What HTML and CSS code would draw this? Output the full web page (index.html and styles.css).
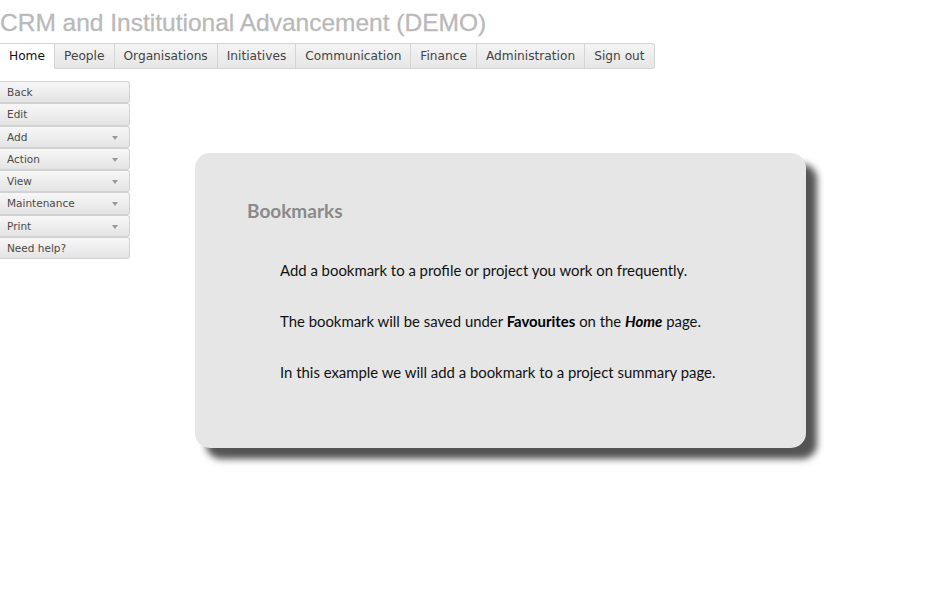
FILE: index.html
```html
<!DOCTYPE html>
<html>
<head>
<meta charset="utf-8">
<link rel="stylesheet" href="styles.css">
</head>
<body>
<div class="title">CRM and Institutional Advancement (DEMO)</div>
<nav class="tabs">
  <span class="tab active">Home</span>
  <span class="tab">People</span>
  <span class="tab">Organisations</span>
  <span class="tab">Initiatives</span>
  <span class="tab">Communication</span>
  <span class="tab">Finance</span>
  <span class="tab">Administration</span>
  <span class="tab">Sign out</span>
</nav>
<div class="main">
  <aside class="side">
    <div class="btn">Back</div>
    <div class="btn">Edit</div>
    <div class="btn drop">Add</div>
    <div class="btn drop">Action</div>
    <div class="btn drop">View</div>
    <div class="btn drop">Maintenance</div>
    <div class="btn drop">Print</div>
    <div class="btn">Need help?</div>
  </aside>
  <section class="card">
    <h2>Bookmarks</h2>
    <p>Add a bookmark to a profile or project you work on frequently.</p>
    <p>The bookmark will be saved under <b>Favourites</b> on the <b><i>Home</i></b> page.</p>
    <p>In this example we will add a bookmark to a project summary page.</p>
  </section>
</div>
</body>
</html>
```
FILE: styles.css
```css
body {
  margin: 0;
  background: #fff;
  font-family: "DejaVu Sans", Verdana, sans-serif;
}
.title {
  font-family: "Liberation Sans", Arial, sans-serif;
  font-size: 24.5px;
  color: #b9b9b9;
  height: 43px;
  line-height: 46px;
  white-space: nowrap;
  -webkit-text-stroke: 0.3px #b9b9b9;
}
.tabs {
  display: flex;
  height: 26px;
}
.tab {
  box-sizing: border-box;
  height: 26px;
  padding: 0 9px;
  font-size: 12.2px;
  line-height: 25px;
  color: #444;
  border: 1px solid #d4d4d4;
  border-left: none;
  background: linear-gradient(#f4f4f4, #e6e6e6);
}
.tab:first-child { border-left: 1px solid #d4d4d4; }
.tab:last-child { border-radius: 0 3px 3px 0; }
.tab.active {
  background: #fff;
  color: #111;
  border-bottom-color: #fff;
  border-left: none;
}
.main {
  display: flex;
  align-items: flex-start;
  padding-top: 12px;
  padding-bottom: 40px;
}
.side {
  width: 130px;
  display: flex;
  flex-direction: column;
}
.btn {
  position: relative;
  box-sizing: border-box;
  height: 22.3px;
  padding-left: 7px;
  font-size: 10.5px;
  line-height: 21px;
  color: #4a4a4a;
  border: 1px solid #d2d2d2;
  border-left: none;
  border-radius: 0 3px 3px 0;
  background: linear-gradient(#f7f7f7, #e4e4e4);
}
.btn.drop::after {
  content: "";
  position: absolute;
  right: 11px;
  top: 9px;
  border-left: 3.5px solid transparent;
  border-right: 3.5px solid transparent;
  border-top: 4px solid #999;
}
.card {
  box-sizing: border-box;
  margin-left: 65px;
  margin-top: 72px;
  width: 611px;
  height: 295px;
  background: #e6e6e6;
  border-radius: 15px;
  box-shadow: 11px 11px 7px #545454;
  padding: 43px 0 0 52px;
  font-family: "Lato", "Open Sans", sans-serif;
}
.card h2 {
  margin: 0 0 33px;
  font-size: 19px;
  font-weight: bold;
  color: #8a8a8a;
  line-height: 30px;
}
.card p {
  margin: 0 0 29px 33px;
  font-size: 14.9px;
  line-height: 22px;
  color: #111;
}
.card b { color: #000; }
```
